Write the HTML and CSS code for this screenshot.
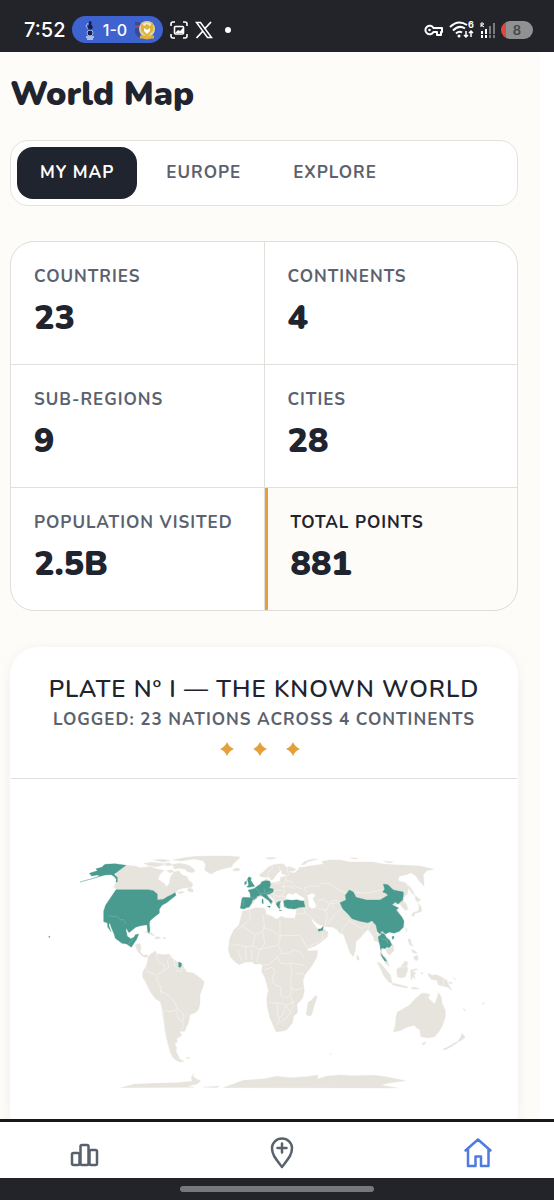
FILE: index.html
```html
<!DOCTYPE html>
<html lang="en">
<head>
    <meta charset="UTF-8">
    <meta name="viewport" content="width=device-width, initial-scale=1.0">
    <title>World Map</title>
    <link rel="stylesheet" href="styles.css">
</head>
<body>
    <!-- Status bar -->
    <header class="status-bar">
        <div class="status-left">
            <span class="clock">7:52</span>
            <div class="score">
                <svg width="12" height="20" viewBox="0 0 12 20">
                    <path d="M5 1l3 1-1 2 2 3-2 3H5L3 7l2-2z" fill="#14204a"/>
                    <path d="M4 3l-2 3 2 3M5 10v2" stroke="#aab8ea" fill="none"/>
                    <circle cx="6" cy="13" r="3" fill="#14204a" stroke="#aab8ea"/>
                    <path d="M2 17h8M3 19h6" stroke="#aab8ea" stroke-width="2"/>
                </svg>
                <span>1-0</span>
                <svg width="20" height="20" viewBox="0 0 20 20">
                    <path d="M0 2h5v15H3L0 13z" fill="#394b91"/>
                    <path d="M0 5h4v3H0z" fill="#b23b58"/>
                    <circle cx="12" cy="9" r="7" fill="#f5edcf" stroke="#e2d3a0" stroke-width="2"/>
                    <path d="M6 2l3 4 3-2 3 2 3-4v9l-6 6-6-6z" fill="#dfb33a"/>
                    <path d="M9 8l3 2 3-2v3l-3 3-3-3z" fill="#fff"/>
                    <path d="M5 17h3l4 1 4-1h3" stroke="#dfb33a" stroke-width="3" fill="none"/>
                </svg>
            </div>
            <svg width="20" height="20" viewBox="0 0 20 20" fill="none" stroke="#fff" stroke-width="1.600">
                <path d="M2 6V4q0-2 2-2h2M14 2h2q2 0 2 2v2M18 14v2q0 2-2 2h-2M6 18H4q-2 0-2-2v-2"/>
                <rect x="5.500" y="6.500" width="9" height="7.500" rx="1"/>
                <path d="M6 13l3-3 2 1 3-3v5z" fill="#fff" stroke="none"/>
            </svg>
            <svg width="18" height="18" viewBox="0 0 18 18" fill="none" stroke="#fff">
                <path d="M1.500 1.500h4l11 15h-4z" stroke-width="1.500"/>
                <path d="M16 1l-6.500 7M8 10l-6.500 7" stroke-width="1.800"/>
            </svg>
            <span class="dot"></span>
        </div>
        <div class="status-right">
            <svg width="20" height="14" viewBox="0 0 20 14" fill="none" stroke="#fff" stroke-width="2">
                <path d="M9.500 5H18v4h-1v3h-4V9H9.500a4.300 4.300 0 1 1 0-4z" stroke-linejoin="round"/>
                <circle cx="5.500" cy="7" r="1.300" fill="#fff" stroke="none"/>
            </svg>
            <svg width="26" height="20" viewBox="0 0 26 20" fill="none" stroke="#fff" stroke-width="2">
                <path d="M1 7q8-8 17-2M4 10.500q6-6 12-2M7 13.500q3-3 6-1"/>
                <circle cx="10" cy="16" r="1.500" fill="#fff" stroke="none"/>
                <path d="M17 11v6M15 15l2 2 2-2M22 17v-6M20 13l2-2 2 2" stroke-width="1.500"/>
                <text class="tiny" x="19" y="8" fill="#fff" stroke="none">6</text>
            </svg>
            <svg width="16" height="18" viewBox="0 0 16 18">
                <path d="M2 10v3M6 8v5" stroke="#fff" stroke-width="2"/>
                <path d="M10 5v8M14 2v11" stroke="#777a80" stroke-width="2"/>
                <path d="M2 14v3M6 14v3" stroke="#fff" stroke-width="2"/>
                <path d="M10 14v3M14 14v3" stroke="#777a80" stroke-width="2"/>
                <path d="M1 6V2h2q1 1 0 2H1l3 2" stroke="#fff" fill="none"/>
            </svg>
            <span class="battery">8</span>
        </div>
    </header>

    <main class="page">
        <h1>World Map</h1>

        <div class="tabs">
            <button class="tab active">MY MAP</button>
            <button class="tab">EUROPE</button>
            <button class="tab">EXPLORE</button>
        </div>

        <!-- Stats -->
        <div class="stats">
            <div class="stat">
                <div class="label">COUNTRIES</div>
                <div class="value">23</div>
            </div>
            <div class="stat">
                <div class="label">CONTINENTS</div>
                <div class="value">4</div>
            </div>
            <div class="stat">
                <div class="label">SUB-REGIONS</div>
                <div class="value">9</div>
            </div>
            <div class="stat">
                <div class="label">CITIES</div>
                <div class="value">28</div>
            </div>
            <div class="stat">
                <div class="label">POPULATION VISITED</div>
                <div class="value">2.5B</div>
            </div>
            <div class="stat total">
                <div class="label">TOTAL POINTS</div>
                <div class="value">881</div>
            </div>
        </div>

        <!-- Map card -->
        <section class="plate">
            <div class="plate-head">
                <h2>PLATE Nº I — THE KNOWN WORLD</h2>
                <p class="label">LOGGED: 23 NATIONS ACROSS 4 CONTINENTS</p>
                <div class="stars">
                    <svg width="14" height="14" viewBox="0 0 14 14"><path d="M7 0q2 5 7 7-5 2-7 7-2-5-7-7 5-2 7-7z"/></svg>
                    <svg width="14" height="14" viewBox="0 0 14 14"><path d="M7 0q2 5 7 7-5 2-7 7-2-5-7-7 5-2 7-7z"/></svg>
                    <svg width="14" height="14" viewBox="0 0 14 14"><path d="M7 0q2 5 7 7-5 2-7 7-2-5-7-7 5-2 7-7z"/></svg>
                </div>
            </div>
            <svg class="map" viewBox="-87 -183 1518 1080" role="img" aria-label="Map of visited countries">
                <g class="land">
                    <!-- Canada and the Arctic islands -->
                    <path d="M258 76l27 2 15 5 30-3 25 8 17 3-12 12-6 15 18 12 8 10 8-10 4-20 10-14 14-4 10 13 14 4 6 11 13 12-4 10-24 2-18 6-8 12-13 6-22 10-18 2v-18l-12-10-15-3h-97l-6-9 10-22-4-18z"/>
                    <path d="M312 70l22-3 30 3 6 5-20 5-24-3zM340 60l30-2 20 4-22 4zM366 71l22-3 8 6-12 4zM398 60l30-6 40-5 22 1-30 7-35 6zM392 74l28-4 16 3 12 4 10 7 8 8-10 6-14-3-8-8-16-2-12 2-8-5 6-4zM380 92l14-3 8 6-12 4zM412 158l12-4 10 2-14 5zM441 149l8-6 10 6v7l-12-1z"/>
                    <!-- Greenland and Iceland -->
                    <path d="M440 53l60-5h65l36 3-9 10-12 10-6 10-26 6-20 6-12 9-10-3-12-9 3-16-8-12-30-6zM578 88l14-4 10 4-6 4-14 1z"/>
                    <!-- Central America and the Caribbean -->
                    <path d="M286 314l14-4 3 12-2 14 8 9 12-1 5 6-12 2-7-3-12-12-5-9zM314 276l10-2 12 6 8 7-10-2-10-6zM344 291l12-1 8 5-16 2zM370 292l7 1v3h-7z"/>
                    <!-- South America -->
                    <path d="M325 350L333 341 347 333 350 341 372 344 388 342 398 356 412 366 426 371 435 387 440 396 460 399 478 412 492 424 491 436 480 464 480 490 476 508 466 518 450 524 446 546 434 574 418 574 426 586 410 596 412 606 404 612 410 622 408 634 414 646 420 658 432 664 418 666 402 656 392 640 386 620 378 590 374 560 368 526 362 486 346 476 330 454 316 424 308 412 308 396 318 380 322 366zM438 652l12 1-6 4z"/>
                    <!-- Europe and Asia -->
                    <path d="M662 110L658 104 672 94 684 82 700 74 722 71 734 74 738 82 750 80 768 88 760 94 748 92 752 98 764 98 776 88 778 82 790 82 806 78 826 76 850 72 846 64 870 60 900 60 930 66 960 66 1000 66 1030 72 1060 74 1100 76 1140 78 1182 88 1160 92 1150 104 1152 124 1152 138 1138 124 1128 108 1112 98 1100 104 1080 108 1074 116 1078 124 1098 128 1106 144 1102 162 1092 172 1090 182 1098 190 1104 206 1098 212 1088 204 1080 192 1060 196 1074 210 1090 240 1084 264 1064 276 1044 278 1034 282 1046 296 1060 316 1062 332 1048 346 1040 336 1036 324 1026 322 1026 340 1036 352 1044 366 1048 380 1038 372 1028 356 1020 344 1022 328 1018 310 1008 302 1004 304 1000 290 990 276 984 268 970 282 962 292 948 306 946 330 940 350 930 338 920 310 910 282 900 280 890 268 878 262 858 260 842 256 830 250 816 236 814 240 822 252 832 266 848 264 864 276 862 290 844 306 826 318 804 326 796 312 784 290 770 264 762 248 764 236 768 222 770 206 732 204 730 184 716 182 722 192 724 200 716 206 708 192 700 178 692 168 682 160 690 172 700 186 694 194 688 184 674 172 664 168 650 174 644 182 634 196 628 204 612 206 604 200 606 176 632 172 632 158 624 150 642 144 652 138 662 130 672 126 676 118 684 118 686 126 700 128 720 124 722 112 736 108 740 104 726 102 724 90 714 98 706 108 700 118 692 120 688 112 676 112z"/>
                    <path d="M784 74l8-9 20-7 22-1-30 8-12 10zM676 54l24-2 8 3-20 3zM930 53l24 1-8 4zM1030 64l30 1-12 4z"/>
                    <!-- Africa and Madagascar -->
                    <path d="M608 213l20-4 20-6 22 1 6 4 2 14 20 8 12 8 14-9 12 5 26 1 5 12 8 26 12 28 12 20 6 12 28-2-2 20-16 28-20 25-6 18 4 32-6 22-16 16 2 26-12 10-3 20-18 22-16 4-16 1-8-18-10-24-8-30-2-28 5-24-10-38-10-18 2-20-8-4-14 2-10-8-20 2-18 7-14-10-12-14-6-20 4-34 12-26 16-16z"/>
                    <path d="M828 465l3 8-8 22-8 30-10 4-7-8 4-18 2-16 10-6z"/>
                    <!-- Sri Lanka, Japan, Taiwan, Philippines -->
                    <path d="M950 344l7 8v9l-6-2zM1126 166l8 8 8 4-8 8-8-6zM1134 188l10 14 1 12-10 4-10 2-4 10-6-4 4-8 16-6 2-12zM1104 134l6 6 10 16 4 12-8-8-10-16zM1097 264l4 4-2 9zM1104 296l8 2 2 14 8 6-12-2-4-10zM1116 328l10 6 6 4-8 2-8-4zM1120 352l12-8 3 12-6 7-6-5z"/>
                    <!-- Indonesia and New Guinea -->
                    <path d="M1011 366l12 5 16 20 12 14 6 25-10-3-16-20-8-18zM1056 430l16 2 18 5 14 4-4 3-26-5-16-4zM1070 388l12-8 14-18 8 6-4 12 4 8-8 22-12 4-12-4zM1112 390l16-4 6 2-16 6 10 6-6 4 4 14-8-8-4 12-2-16zM1112 443l14-1 12 4-18 2zM1142 397l8 2-4 4zM1164 400l14 6 12-2 20 10 12 8 2 10 12 18-16-9-16-4-10-3-2-12-18-4-8-10z"/>
                    <path d="M1224 426l14 2-8 4zM1238 410l10 10-6-4zM1270 504l8 9-6-2zM1326 492l10-5-6 6zM868 642l7 1z"/>
                    <!-- Australia, Tasmania and New Zealand -->
                    <path d="M1060 576L1066 554 1068 530 1072 516 1090 506 1108 496 1124 478 1136 468 1144 460 1158 460 1170 464 1164 474 1184 492 1190 478 1196 458 1204 472 1206 490 1216 510 1216 530 1208 556 1196 576 1184 590 1166 594 1142 590 1140 570 1130 564 1122 556 1100 562 1080 572zM1145 610l14-4-8 10zM1208 628l16-8 24-14 6 1-18 12-20 11zM1254 602l8-10 4-12 10 12-10 8-10 6z"/>
                    <!-- Antarctica -->
                    <path d="M242 743l40-10 60-3 70-2 44-4-2-14 8-10-4 8 12 10 12 4-10 10-30 6 20 4zM490 741l50-2-10 4zM550 743l60-22 60-4 40-8 40 4 50-3 34-5-2 12 30-9 40-3 30 2 70-1 35 4 60 12-50 7-25 6 50 9z"/>
                </g>
                <g class="sea">
                    <!-- Black Sea, Caspian Sea -->
                    <path d="M736 178l4-12 8-6 10 4 10-6 8 6 16 10 2 6-16 1-16-1-14 4zM802 166l16-6 8 6-8 10 8 14 2 12-12 4-10-8v-16z"/>
                </g>
                <g class="borders">
                    <!-- Americas -->
                    <path d="M350 340l4 24 18 10 2 16-20 12-4 18 10 16 4 26M374 390l12-8-4-22 10-12M402 360l2 18 10 8M428 384l-4 10-18-2M318 392l16 8 12 4M360 454l14 4 16 14 14 14 8 22 12 6 8 16-4 16M364 500l6 20 4 50 6 28 10 40 8 20M374 510l18 6 16-6 8 26 16 14-8 20"/>
                    <!-- Africa -->
                    <path d="M628 210l4 26-24 22-16 10M608 258l38 26 20-8 8-14-6-40M646 284l-8 34-22 2-22-6-20 2M668 262l36 14 20 20M720 240v58l-6 16 12 28 20-4 16-8 18 6 14 18M670 280l4 32-18 24-6 30M638 318l22 10 44-10 10-6M594 330l8 24 8 10M616 320l2 40M634 326l2 34M720 286h58M670 376l20-4 22-22M712 350l10 20 20 2 18-4 8 6M672 390l24-8 10 12-10 24 8 16 20 8-4 22 10 8 20-2M752 370l4 30-4 22 2 20 12 8 22-4M766 402l24-2M754 440l-2 26 8 30-10 24M688 488l40 2 10 6 24-10M712 490v28l6 22-6 14M736 498l-8 26-14 12M738 498l14 20-14 18-14 8M768 372l26 4"/>
                    <!-- Middle East and Asia -->
                    <path d="M768 222l30-2 18 14M790 200l6 20M796 202l10 4M828 204l32 6 8-18 26-4M856 210l6 20-6 26M862 256l16-26 20-20 10-6M904 280l6-18 20-20M926 240l20 14 20 12 16-10M804 320l28-12 16-10v-20M800 158l-8-14 20-8 24 4 10-12 24 4 30 20 26 8M830 184l20-6 14 10 20-8 16 6M836 190l-6 10M880 204l-6-16M940 156l40 4 46-10M984 268l4-16 8-6M1016 290l-6-12M1044 290l10 30-16 6M1092 172l-10 14M1090 190l10-4M1210 412v28M1076 384l22-6"/>
                    <!-- Europe -->
                    <path d="M692 126l-2 20 14 18 18 8 12-16-4-22 8-16M700 162l4 20 14 0 14-6M718 166l12 4 10 2M700 80l-14 16-4 16M716 78l6 14M740 82l6 22-10 6 2 12 16 2 8 14 24 10M726 140l24-2 14 8M700 132l24-4M700 150l26 2"/>
                </g>
                <g class="visited">
                    <!-- United States -->
                    <path d="M258 76l-33-5-30 2-10 9-17 4 4 6-24 8 7 8 17-3 8 3-20 7-40 11 43-12 32-9 18-1 9 5 7 9-1 8h4V112l-10-9zM228 149h97l15 3 12 10v18l18-2 12-8 13-6 10-6 3 8-18 14-10 8-14 8-8 12v12l-14 10-14 12-2 10 2 18-3 10-4-6-2-20-10 2-12 2-12 4-20 16-10-16-18-6-6-4-30-3-12-4v-32l6-18z"/>
                    <path d="M26 288l4 2-2 4z"/>
                    <!-- Mexico, Guatemala, Belize -->
                    <path d="M201 225l12 2 24 3 12 5 12 14-3 22 4 18 10 7 10-4 4-8 10-2-6 16-8 12-8 12-14-10-14-2-20-15-4-14-8-18-6-20-1 14 6 18-10-14z"/>
                    <!-- French Guiana -->
                    <path d="M416 366l8 3v9l-5 5-3-4z"/>
                    <!-- UK and Ireland -->
                    <path d="M622 118l5-8 7 4-2 7 8 12 4 6-16 3-8-1 6-6-2-10zM614 127l5-5v10l-5 2z"/>
                    <!-- Spain, Portugal, France, Germany, Alps, Italy -->
                    <path d="M606 175l4-3 22 1-2-14-6-8 18-5 12-9 8-5 3-7 10-3 14 1 3 11-4 10 12 3-1 9-12 7-8 0 8 12 10 8-4 8-8-10-14-10-8-6-12 4-2 6-12 6-2 8-8 12-10 2-4 4-12-2 2-12z"/>
                    <path d="M666 178l3-1 1 14-4-2zM682 199l9-1-2 5zM708 192l6-7 8-1-2 5-2 8 2 9-6-4zM718 210l8 1-7 1z"/>
                    <!-- Turkey -->
                    <path d="M731 183l10-4 14 2 16-2 12 4 8 0 4 18-16 1-16 5-20-2-10-6z"/>
                    <!-- UAE -->
                    <path d="M834 268l8-1 8-8-2 12-12 3z"/>
                    <!-- China -->
                    <path d="M900 188L918 180 916 166 928 150 940 156 948 172 980 180 1020 180 1044 166 1038 160 1028 156 1034 148 1030 132 1044 134 1060 150 1090 156 1090 164 1088 180 1074 192 1066 186 1056 194 1064 198 1076 204 1068 210 1086 232 1092 244 1090 262 1078 274 1062 280 1048 276 1036 282 1026 272 1020 282 1012 274 1008 256 996 242 984 248 960 244 936 236 924 222 908 206z"/>
                    <path d="M1056 290l6-2-1 8-4 2z"/>
                    <!-- Thailand and Laos -->
                    <path d="M1016 289l7-4 2-6 8 4 6 10 10 8 6 14-8 8-6-3-6 6-10-2-3 6-2-14-4-16-1-8zM1023 341l5 7 8 8 4 8-6-2-8-12z"/>
                </g>
                <g class="borders thin">
                    <path d="M204 228l28 2 10 10 8-2 8 14M264 312l10-8 4-8M612 178l-2 22M632 173l16 2M646 142l14 18 4 12M662 160l14 0 18-6M676 158l-4-12M1022 292l6 6 12 2 4 12"/>
                </g>
            </svg>
        </section>
    </main>

    <!-- Bottom navigation -->
    <nav class="bottom-nav">
        <a href="#stats" aria-label="Stats">
            <svg width="30" height="32" viewBox="0 0 30 32" fill="none" stroke="#59616c" stroke-width="2.500">
                <rect x="2" y="16" width="7.500" height="12" rx="1.500"/>
                <rect x="10.500" y="8" width="8" height="20" rx="1.500"/>
                <rect x="19.500" y="13" width="7.500" height="15" rx="1.500"/>
            </svg>
        </a>
        <a href="#add" aria-label="Add place">
            <svg width="30" height="32" viewBox="0 0 30 32" fill="none" stroke="#59616c" stroke-width="2.500" stroke-linecap="round" stroke-linejoin="round">
                <path d="M15 30C9 22 5 18 5 11a10 9.500 0 0 1 20 0C25 18 21 22 15 30zM15 6.500v9M10.500 11h9"/>
            </svg>
        </a>
        <a href="#home" aria-label="Home">
            <svg width="30" height="32" viewBox="0 0 30 32" fill="none" stroke="#4f7be0" stroke-width="2.500" stroke-linecap="round" stroke-linejoin="round">
                <path d="M2.500 13.500L15 2.500l12.500 11M5 12v17h7.500V19.500h5.500V29h7.500V12"/>
            </svg>
        </a>
    </nav>
    <div class="gesture-bar"><span></span></div>
</body>
</html>
```
FILE: styles.css
```css
* {
    box-sizing: border-box;
}
body {
    margin: 0;
    height: 100vh;
    display: flex;
    flex-direction: column;
    overflow: hidden;
    font-family: Nunito, "Open Sans", sans-serif;
    background-color: #fff;
    color: #20242f;
}
/* Status bar */
.status-bar {
    flex: none;
    height: 52px;
    padding: 7px 21px 0 24px;
    display: flex;
    justify-content: space-between;
    align-items: center;
    background-color: #232429;
    color: #fff;
    font-family: Inter, sans-serif;
}
.status-left {
    display: flex;
    align-items: center;
    gap: 6px;
}
.status-right {
    display: flex;
    align-items: center;
    gap: 5px;
}
.clock {
    font-size: 20px;
    font-weight: 500;
}
.score {
    display: flex;
    align-items: center;
    justify-content: space-between;
    width: 91px;
    height: 27px;
    padding: 0 8px 0 12px;
    border-radius: 14px;
    background-color: #3f63ce;
    font-size: 16px;
    font-weight: 500;
}
.dot {
    width: 6px;
    height: 6px;
    margin-left: 6px;
    border-radius: 50%;
    background-color: #fff;
}
.tiny {
    font-size: 9px;
    font-weight: 700;
}
.battery {
    width: 32px;
    height: 18px;
    border-radius: 9px;
    background: linear-gradient(90deg, #e0483e 5px, #909193 5px);
    color: #45464a;
    font-size: 13px;
    font-weight: 600;
    line-height: 18px;
    text-align: center;
}
/* Page */
.page {
    flex: 1;
    min-height: 0;
    overflow: hidden;
    margin-right: 14px;
    padding: 18px 22px 0 10px;
    background-color: #fdfcf8;
}
h1 {
    margin: 0 0 22px;
    font-size: 34px;
    font-weight: 900;
    line-height: 48px;
}
.tabs {
    display: flex;
    gap: 6px;
    margin-bottom: 35px;
    padding: 6px;
    border: 1px solid #e4e2dd;
    border-radius: 18px;
    background-color: #fff;
}
.tab {
    height: 52px;
    padding: 0 23px 2px;
    border: none;
    border-radius: 16px;
    background: none;
    color: #5b626e;
    font: inherit;
    font-size: 17px;
    font-weight: 700;
    letter-spacing: 1px;
    cursor: pointer;
}
.tab.active {
    background-color: #20242f;
    color: #fff;
}
/* Stats */
.stats {
    display: grid;
    grid-template-columns: 1fr 1fr;
    gap: 1px;
    margin-bottom: 36px;
    border: 1px solid #e0dfdb;
    border-radius: 24px;
    overflow: hidden;
    background-color: #e0dfdb;
}
.stat {
    padding: 23px 0 22px 23px;
    background-color: #fff;
}
.label {
    margin: 0;
    color: #5b626e;
    font-size: 17px;
    font-weight: 700;
    line-height: 24px;
    letter-spacing: 1px;
    white-space: nowrap;
}
.value {
    margin-top: 5px;
    font-size: 34px;
    font-weight: 900;
    line-height: 48px;
}
.total {
    border-left: 3px solid #e5a03c;
    background-color: #fdfcf8;
}
.total .label {
    color: #20242f;
}
/* Map card */
.plate {
    border: 1px solid #fff;
    border-radius: 28px;
    background-color: #fff;
    box-shadow: 0 2px 12px rgba(32, 36, 47, 0.06);
}
.plate-head {
    padding: 23px 0 22px;
    border-bottom: 1px solid #dfdfdf;
    text-align: center;
}
h2 {
    margin: 0 0 1px;
    font-size: 24px;
    font-weight: 600;
    line-height: 36px;
    letter-spacing: 1px;
    white-space: nowrap;
}
.stars {
    display: flex;
    justify-content: center;
    gap: 19px;
    margin-top: 10px;
    padding-right: 8px;
}
.stars svg {
    fill: #e5a03c;
}
.map {
    display: block;
    width: 100%;
}
.land {
    fill: #e7e4dd;
    stroke: #e7e4dd;
}
.sea {
    fill: #fff;
}
.visited {
    fill: #489b8e;
    stroke: #489b8e;
}
.borders {
    fill: none;
    stroke: #f7f5f1;
    stroke-width: 2px;
}
.thin {
    stroke: #a5cfc7;
    stroke-width: 1px;
}
/* Bottom navigation */
.bottom-nav {
    flex: none;
    display: flex;
    justify-content: space-between;
    align-items: center;
    height: 59px;
    padding: 5px 61px 0 70px;
    border-top: 3px solid #17181c;
    background-color: #fff;
}
.bottom-nav a {
    height: 32px;
}
.gesture-bar {
    flex: none;
    height: 22px;
    display: flex;
    justify-content: center;
    align-items: center;
    background-color: #232429;
}
.gesture-bar span {
    width: 35%;
    height: 6px;
    border-radius: 3px;
    background-color: #77787c;
}
```
